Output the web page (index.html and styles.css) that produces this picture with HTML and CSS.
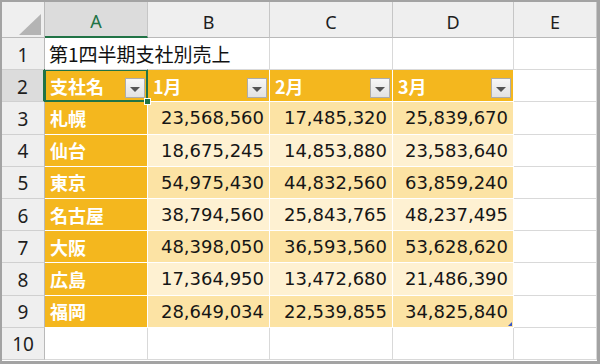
FILE: index.html
```html
<!DOCTYPE html>
<html lang="ja">
<head>
<meta charset="utf-8">
<link rel="stylesheet" href="styles.css">
</head>
<body>
<div class="frame">
  <div class="sheet">
    <div class="corner"><svg width="42" height="35" viewBox="0 0 42 35"><polygon points="17,33 39,33 39,12" fill="#b4b4b4"/></svg></div>
    <div class="colh sel">A</div>
    <div class="colh">B</div>
    <div class="colh">C</div>
    <div class="colh">D</div>
    <div class="colh">E</div>

    <div class="rowh">1</div>
    <div class="cell title">第1四半期支社別売上</div>
    <div class="cell"></div>
    <div class="cell"></div>
    <div class="cell"></div>
    <div class="cell"></div>

    <div class="rowh sel">2</div>
    <div class="cell th active"><span class="lbl">支社名</span><span class="dd"></span></div>
    <div class="cell th"><span class="lbl">1月</span><span class="dd"></span></div>
    <div class="cell th"><span class="lbl">2月</span><span class="dd"></span></div>
    <div class="cell th"><span class="lbl">3月</span><span class="dd"></span></div>
    <div class="cell"></div>

    <div class="rowh">3</div>
    <div class="cell name">札幌</div>
    <div class="cell num b1">23,568,560</div>
    <div class="cell num b1">17,485,320</div>
    <div class="cell num b1">25,839,670</div>
    <div class="cell"></div>

    <div class="rowh">4</div>
    <div class="cell name">仙台</div>
    <div class="cell num b2">18,675,245</div>
    <div class="cell num b2">14,853,880</div>
    <div class="cell num b2">23,583,640</div>
    <div class="cell"></div>

    <div class="rowh">5</div>
    <div class="cell name">東京</div>
    <div class="cell num b1">54,975,430</div>
    <div class="cell num b1">44,832,560</div>
    <div class="cell num b1">63,859,240</div>
    <div class="cell"></div>

    <div class="rowh">6</div>
    <div class="cell name">名古屋</div>
    <div class="cell num b2">38,794,560</div>
    <div class="cell num b2">25,843,765</div>
    <div class="cell num b2">48,237,495</div>
    <div class="cell"></div>

    <div class="rowh">7</div>
    <div class="cell name">大阪</div>
    <div class="cell num b1">48,398,050</div>
    <div class="cell num b1">36,593,560</div>
    <div class="cell num b1">53,628,620</div>
    <div class="cell"></div>

    <div class="rowh">8</div>
    <div class="cell name">広島</div>
    <div class="cell num b2">17,364,950</div>
    <div class="cell num b2">13,472,680</div>
    <div class="cell num b2">21,486,390</div>
    <div class="cell"></div>

    <div class="rowh">9</div>
    <div class="cell name">福岡</div>
    <div class="cell num b1">28,649,034</div>
    <div class="cell num b1">22,539,855</div>
    <div class="cell num b1 last">34,825,840</div>
    <div class="cell"></div>

    <div class="rowh">10</div>
    <div class="cell"></div>
    <div class="cell"></div>
    <div class="cell"></div>
    <div class="cell"></div>
    <div class="cell"></div>
  </div>
</div>
</body>
</html>
```
FILE: styles.css
```css
html, body {
  margin: 0;
  padding: 0;
  background: #fff;
}

.frame {
  width: 600px;
  height: 364px;
  box-sizing: border-box;
  border-style: solid;
  border-color: #a3a3a3;
  border-width: 2px 3px 3px 2px;
  background: #fff;
  overflow: hidden;
}

.sheet {
  display: grid;
  grid-template-columns: 43px 103px 122px 123px 121px 1fr;
  grid-template-rows: 36px repeat(10, 32.2px);
}

.sheet > div {
  box-sizing: border-box;
  min-width: 0;
}

.corner {
  background: #efefef;
  border-right: 1px solid #b9b9b9;
  border-bottom: 1px solid #b9b9b9;
  overflow: hidden;
}

.corner svg {
  display: block;
}

.colh {
  background: #efefef;
  border-right: 1px solid #c6c6c6;
  border-bottom: 1px solid #b9b9b9;
  display: flex;
  align-items: center;
  justify-content: center;
  padding-top: 4px;
  font-family: "Noto Sans", "DejaVu Sans", sans-serif;
  font-size: 18px;
  color: #1e1e1e;
}

.colh.sel {
  background: #dcdcdc;
  color: #217346;
  border-bottom: 2px solid #217346;
}

.rowh {
  background: #efefef;
  border-right: 1px solid #b9b9b9;
  border-bottom: 1px solid #d0d0d0;
  display: flex;
  align-items: center;
  justify-content: center;
  padding-top: 2px;
  font-family: "Noto Sans", "DejaVu Sans", sans-serif;
  font-size: 19px;
  color: #1e1e1e;
}

.rowh.sel {
  background: #dcdcdc;
  border-right: 2px solid #217346;
}

.cell {
  border-right: 1px solid #d9d9d9;
  border-bottom: 1px solid #d9d9d9;
  display: flex;
  align-items: center;
  font-family: "Noto Sans CJK JP", "DejaVu Sans", sans-serif;
  font-size: 18px;
  color: #111;
  position: relative;
}

.title {
  border-right-color: transparent;
  white-space: nowrap;
  overflow: visible;
  padding-left: 4px;
  font-size: 19px;
  z-index: 1;
}

.th {
  background: #f4b71e;
  color: #fff;
  font-weight: bold;
  border-right: 1px solid #fff;
  border-bottom: 1px solid #fff;
  padding-left: 5px;
  padding-right: 2px;
}

.th .lbl {
  flex: 1;
}

.dd {
  align-self: flex-end;
  margin-bottom: 3px;
  width: 20px;
  height: 20px;
  box-sizing: border-box;
  border: 1px solid #acacac;
  background: linear-gradient(#f7f7f7, #e2e2e2);
  display: flex;
  align-items: center;
  justify-content: center;
  padding-top: 3px;
}

.dd::before {
  content: "";
  width: 0;
  height: 0;
  border-left: 5px solid transparent;
  border-right: 5px solid transparent;
  border-top: 5px solid #555;
}

.active::after {
  content: "";
  position: absolute;
  left: -1px;
  top: -1px;
  right: -1px;
  bottom: -1px;
  border: 2px solid #217346;
  pointer-events: none;
}

.active::before {
  content: "";
  position: absolute;
  right: -4px;
  bottom: -4px;
  width: 5px;
  height: 5px;
  background: #217346;
  border: 1px solid #fff;
  z-index: 2;
}

.name {
  background: #f4b71e;
  color: #fff;
  font-weight: bold;
  border-right: 1px solid #fff;
  border-bottom: 1px solid #fff;
  padding-left: 5px;
}

.num {
  justify-content: flex-end;
  padding-right: 5px;
  font-family: "DejaVu Sans", sans-serif;
  font-size: 18px;
  color: #161616;
  border-right: 1px solid #fff;
  border-bottom: 1px solid #fff;
}

.b1 {
  background: #fce3a4;
}

.b2 {
  background: #fef1d2;
}

.last::after {
  content: "";
  position: absolute;
  right: 1px;
  bottom: 1px;
  width: 0;
  height: 0;
  border-left: 4px solid transparent;
  border-bottom: 4px solid #3557c9;
}
```
